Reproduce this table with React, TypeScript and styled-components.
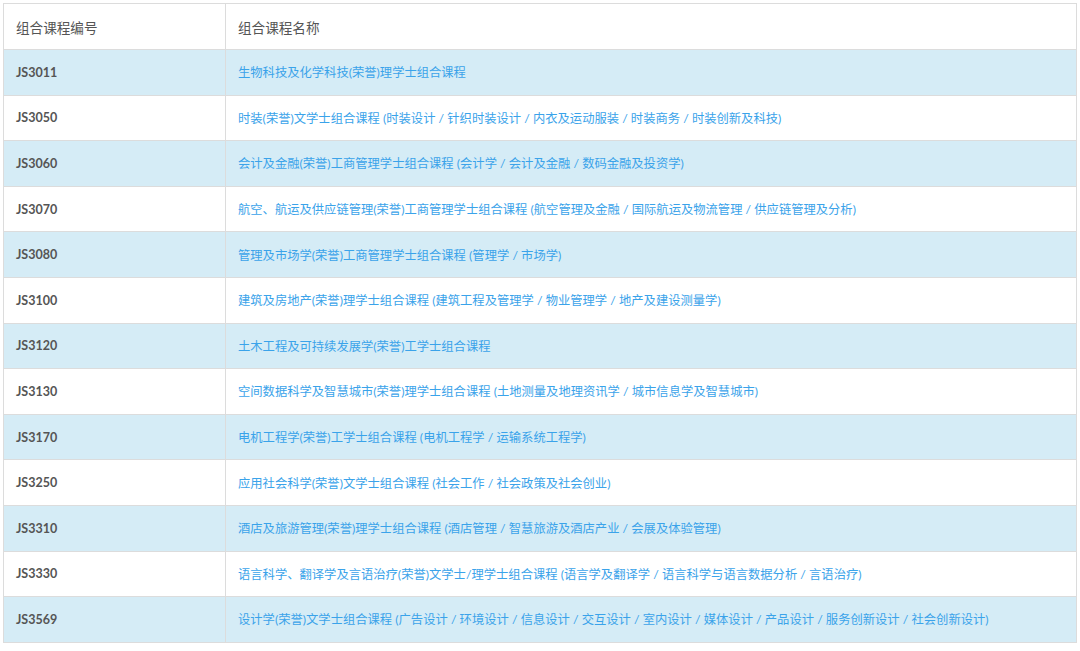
import React from "react";
import styled, { createGlobalStyle } from "styled-components";

const Global = createGlobalStyle`
  html, body { margin: 0; padding: 0; background: #fff; }
  body { font-family: Lato, "Noto Sans CJK SC", sans-serif; }
`;

const Page = styled.div`
  padding: 3px 3px 0 3px;
`;

const Table = styled.table`
  width: 1074px;
  border-collapse: collapse;
  table-layout: fixed;
  border: 1px solid #dcdcdc;
`;

const HeadCell = styled.th`
  height: 45px;
  padding: 0 0 0 12px;
  text-align: left;
  font-weight: 400;
  font-size: 13.6px;
  color: #555;
  border: 1px solid #dcdcdc;
  background: #fff;
`;

const Row = styled.tr<{ $striped: boolean }>`
  height: 45.6px;
  background: ${(p) => (p.$striped ? "#d5ecf6" : "#fff")};
`;

const CodeCell = styled.td`
  padding: 0 0 0 12px;
  font-size: 12.5px;
  font-weight: 700;
  color: #555;
  border: 1px solid #dcdcdc;
`;

const NameCell = styled.td`
  padding: 0 0 0 12px;
  font-size: 12.3px;
  color: #3aa3ea;
  border: 1px solid #dcdcdc;
  white-space: nowrap;
`;

const rows: [string, string][] = [
  ["JS3011", "生物科技及化学科技(荣誉)理学士组合课程"],
  ["JS3050", "时装(荣誉)文学士组合课程 (时装设计 / 针织时装设计 / 内衣及运动服装 / 时装商务 / 时装创新及科技)"],
  ["JS3060", "会计及金融(荣誉)工商管理学士组合课程 (会计学 / 会计及金融 / 数码金融及投资学)"],
  ["JS3070", "航空、航运及供应链管理(荣誉)工商管理学士组合课程 (航空管理及金融 / 国际航运及物流管理 / 供应链管理及分析)"],
  ["JS3080", "管理及市场学(荣誉)工商管理学士组合课程 (管理学 / 市场学)"],
  ["JS3100", "建筑及房地产(荣誉)理学士组合课程 (建筑工程及管理学 / 物业管理学 / 地产及建设测量学)"],
  ["JS3120", "土木工程及可持续发展学(荣誉)工学士组合课程"],
  ["JS3130", "空间数据科学及智慧城市(荣誉)理学士组合课程 (土地测量及地理资讯学 / 城市信息学及智慧城市)"],
  ["JS3170", "电机工程学(荣誉)工学士组合课程 (电机工程学 / 运输系统工程学)"],
  ["JS3250", "应用社会科学(荣誉)文学士组合课程 (社会工作 / 社会政策及社会创业)"],
  ["JS3310", "酒店及旅游管理(荣誉)理学士组合课程 (酒店管理 / 智慧旅游及酒店产业 / 会展及体验管理)"],
  ["JS3330", "语言科学、翻译学及言语治疗(荣誉)文学士/理学士组合课程 (语言学及翻译学 / 语言科学与语言数据分析 / 言语治疗)"],
  ["JS3569", "设计学(荣誉)文学士组合课程 (广告设计 / 环境设计 / 信息设计 / 交互设计 / 室内设计 / 媒体设计 / 产品设计 / 服务创新设计 / 社会创新设计)"],
];

export default function App() {
  return (
    <Page>
      <Global />
      <Table>
        <colgroup>
          <col style={{ width: 222 }} />
          <col />
        </colgroup>
        <thead>
          <tr>
            <HeadCell>组合课程编号</HeadCell>
            <HeadCell>组合课程名称</HeadCell>
          </tr>
        </thead>
        <tbody>
          {rows.map(([code, name], i) => (
            <Row key={code} $striped={i % 2 === 0}>
              <CodeCell>{code}</CodeCell>
              <NameCell>{name}</NameCell>
            </Row>
          ))}
        </tbody>
      </Table>
    </Page>
  );
}
